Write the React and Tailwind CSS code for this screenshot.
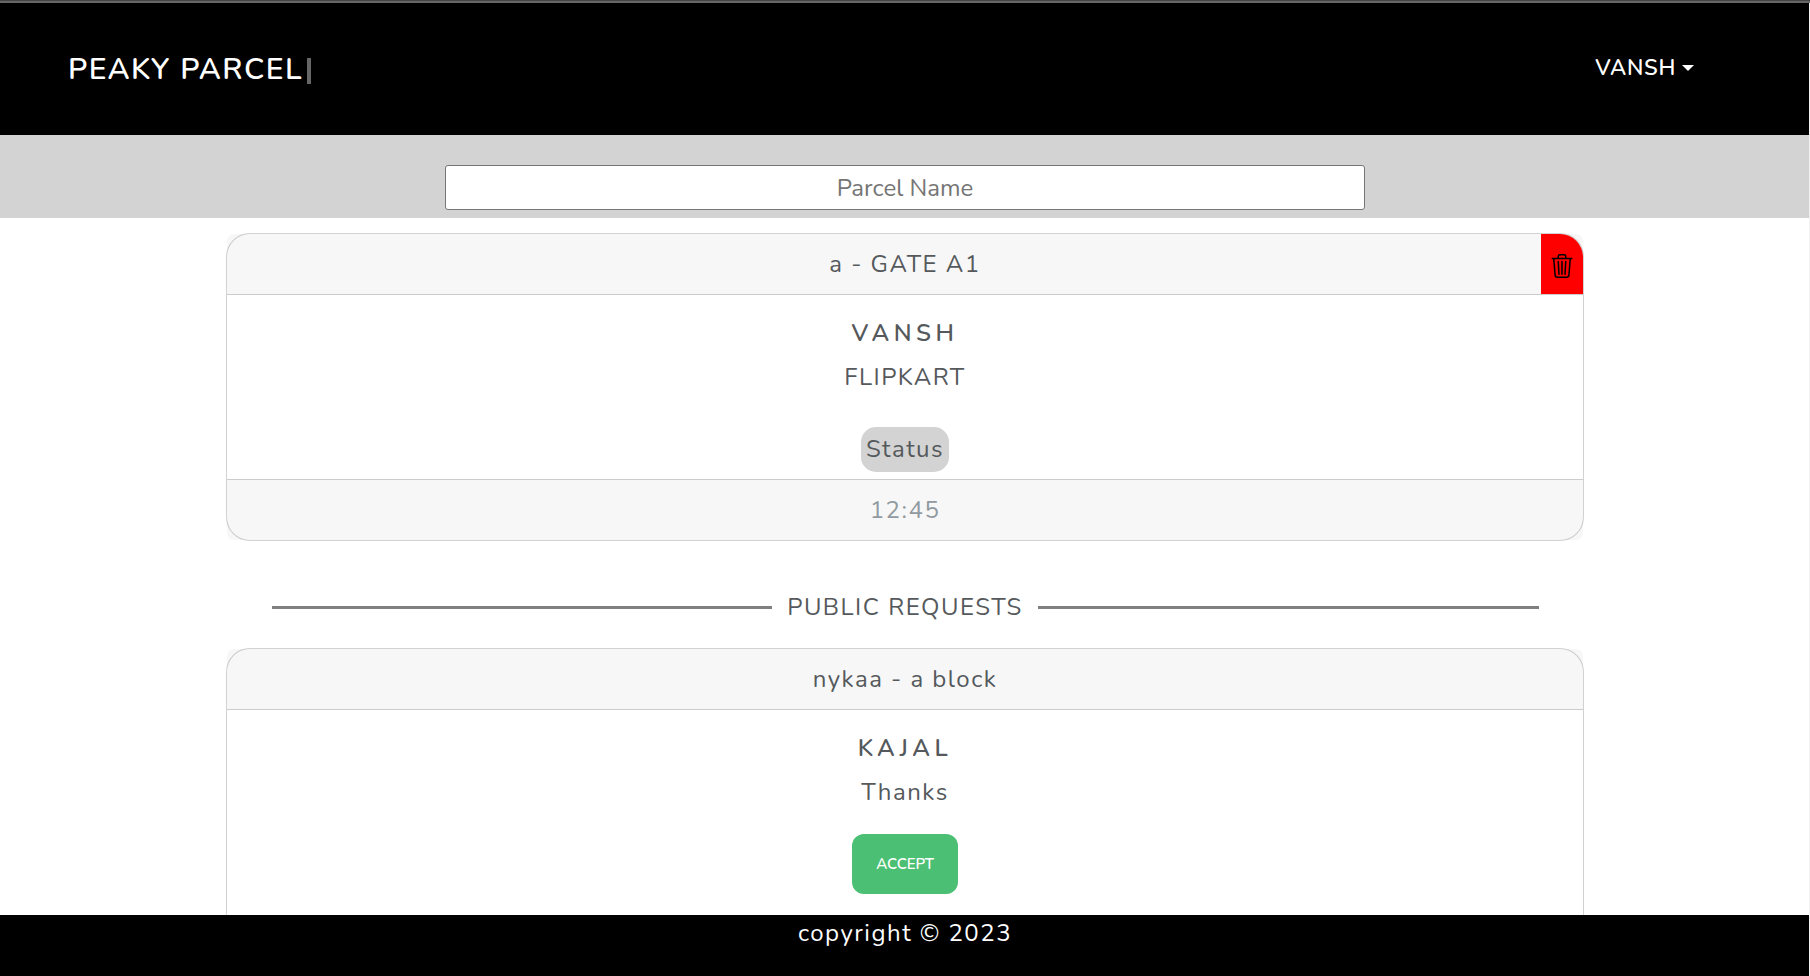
import React from 'react';
import { BsTrash3 } from 'react-icons/bs';

function ParcelCard({ title, name, detail, action, children, footer, className = '' }) {
  return (
    <article
      className={`flex w-[1358px] shrink-0 flex-col rounded-[24px] border border-black/[0.176] bg-white text-center ${className}`}
    >
      <header className="relative h-[61px] rounded-t-[7px] border-b border-black/[0.176] bg-black/[0.03] pt-3 pl-px">
        {title}
        {action}
      </header>
      <div className="flex grow flex-col items-center pt-5">
        <h2 className="pl-px font-semibold tracking-[4.5px]">{name}</h2>
        <p className="mt-2 pl-px">{detail}</p>
        {children}
      </div>
      {footer && (
        <footer className="h-[61px] rounded-b-[7px] border-t border-black/[0.176] bg-black/[0.03] pt-3 pl-px text-[#919aa1]">
          {footer}
        </footer>
      )}
    </article>
  );
}

function DeleteButton() {
  return (
    <button
      aria-label="Delete"
      className="absolute top-0 right-0 flex h-[60px] w-[42px] items-center justify-center rounded-tr-[23px] bg-[#ff0000] pt-1 text-black"
    >
      <BsTrash3 size={24} />
    </button>
  );
}

export default function App() {
  return (
    <div className="flex h-[976px] flex-col overflow-hidden bg-white font-['Nunito','Lato',sans-serif] text-[24px] leading-[36px] tracking-[1.5px] text-[#55595c]">
      <div className="h-[3px] shrink-0 border-t border-[#444444] bg-[#666666]" />
      <div className="flex min-h-0 grow flex-col border-r border-[#f1f1f1]">
        <nav className="flex h-[132px] shrink-0 items-center justify-between bg-black pr-[115px] pl-[68px] text-white">
          <div className="flex items-center text-[30px] leading-[45px] font-semibold">
            PEAKY PARCEL
            <span className="mt-[3px] ml-[4px] h-[26px] w-[4px] bg-[#666666]" />
          </div>
          <button className="mb-[2px] flex items-center text-[22px] leading-[33px] font-semibold tracking-[0.7px]">
            VANSH
            <span className="ml-[6px] border-x-[6px] border-t-[6px] border-x-transparent border-t-white" />
          </button>
        </nav>

        <div className="flex h-[83px] shrink-0 justify-center bg-[#d3d3d3] pt-[30px]">
          <input
            placeholder="Parcel Name"
            className="h-[45px] w-[920px] rounded-[3px] border border-[#767676] bg-white pl-px text-center tracking-normal placeholder:text-[#757575]"
          />
        </div>

        <main className="flex min-h-0 grow flex-col items-center overflow-hidden pt-[15px]">
          <ParcelCard
            className="h-[308px]"
            title="a - GATE A1"
            name="VANSH"
            detail="FLIPKART"
            action={<DeleteButton />}
            footer="12:45"
          >
            <div className="mt-8 flex h-[45px] w-[88px] justify-center rounded-[15px] bg-[#d3d3d3] pt-1 pl-px">
              Status
            </div>
          </ParcelCard>

          <div className="mt-12 ml-0.5 flex w-[1267px] shrink-0 items-start">
            <span className="mt-[17px] h-[3px] w-[500px] shrink-0 bg-[#808080]" />
            <span className="grow text-center whitespace-nowrap">PUBLIC REQUESTS</span>
            <span className="mt-[17px] h-[3px] w-[501px] shrink-0 bg-[#808080]" />
          </div>

          <ParcelCard
            className="mt-[23px] h-[308px]"
            title="nykaa - a block"
            name="KAJAL"
            detail="Thanks"
          >
            <button className="mt-6 h-[60px] w-[106px] rounded-[12px] bg-[#4bbf73] pl-px text-[15px] font-semibold tracking-[-0.1px] text-white">
              ACCEPT
            </button>
          </ParcelCard>
        </main>

        <footer className="h-[61px] shrink-0 bg-black pl-px text-center text-white">copyright © 2023</footer>
      </div>
    </div>
  );
}
